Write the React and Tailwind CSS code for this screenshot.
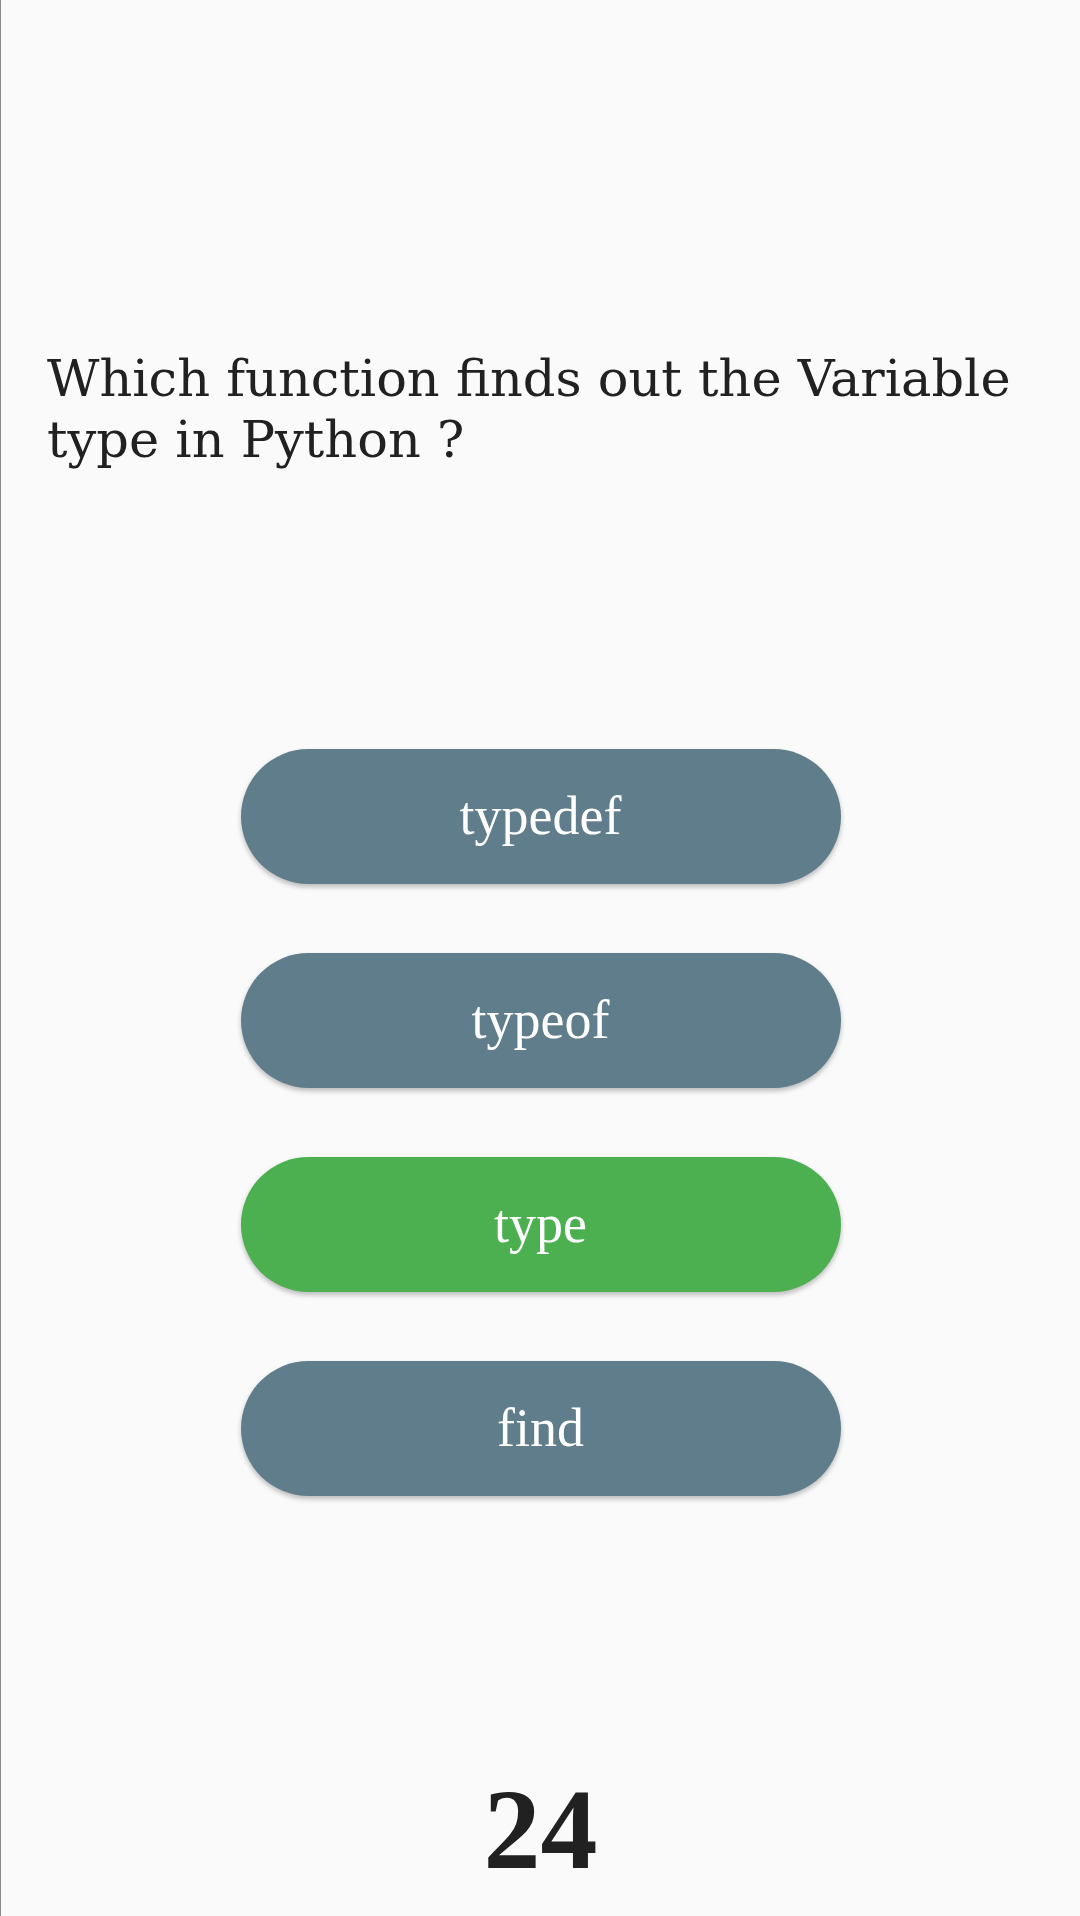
import React from 'react';

const options = [
  { label: 'typedef', correct: false },
  { label: 'typeof', correct: false },
  { label: 'type', correct: true },
  { label: 'find', correct: false },
];

export default function App() {
  return (
    <div className="min-h-[1916px] w-[1080px] bg-[#fafafa] border-l border-[#8a8a8a] flex flex-col">
      {/* Question */}
      <div className="mt-[348px] px-[46px]">
        <p className="text-[51px] leading-[61px] text-[#212121] font-['DejaVu_Serif',serif]">
          Which function finds out the Variable type in Python ?
        </p>
      </div>

      {/* Options */}
      <div className="mt-[279px] flex flex-col items-center gap-[69px]">
        {options.map((opt) => (
          <button
            key={opt.label}
            className={`w-[600px] h-[135px] rounded-full flex items-center justify-center text-white text-[54px] font-['Liberation_Serif',serif] shadow-[0_3px_5px_rgba(0,0,0,0.25)] ${
              opt.correct ? 'bg-[#4caf50]' : 'bg-[#607d8b]'
            }`}
          >
            {opt.label}
          </button>
        ))}
      </div>

      {/* Counter */}
      <div className="mt-[278px] flex justify-center">
        <span className="text-[114px] leading-[112px] font-bold text-[#212121] font-['Liberation_Serif',serif]">
          24
        </span>
      </div>
    </div>
  );
}
